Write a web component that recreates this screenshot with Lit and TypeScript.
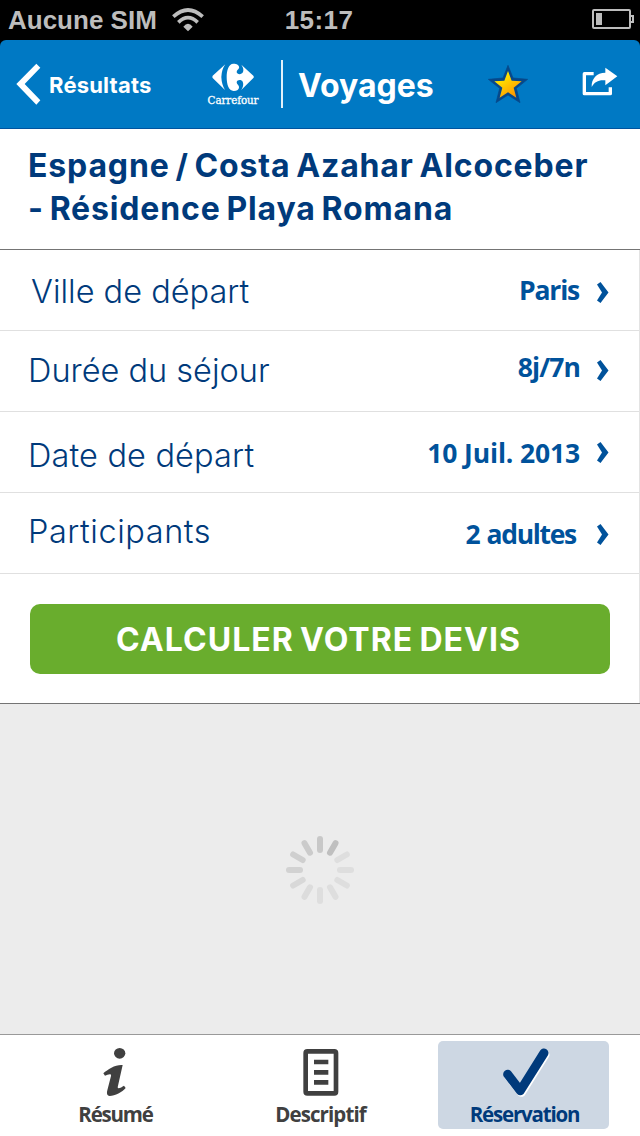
import { LitElement, html, css, svg } from "lit";
import { customElement } from "lit/decorators.js";

interface Option {
  id: string;
  label: string;
  value: string;
}

const OPTIONS: Option[] = [
  { id: "city", label: "Ville de départ", value: "Paris" },
  { id: "stay", label: "Durée du séjour", value: "8j/7n" },
  { id: "date", label: "Date de départ", value: "10 Juil. 2013" },
  { id: "people", label: "Participants", value: "2 adultes" },
];

const SPOKES = ["#c8c8c8", "#bfbfbf", "#dedede", "#dedede", "#dedede", "#dedede",
  "#dedede", "#dcdcdc", "#d8d8d8", "#d2d2d2", "#cfcfcf", "#cbcbcb"];

@customElement("status-bar")
class StatusBar extends LitElement {
  static styles = css`
    :host { display: grid; grid-template-columns: 1fr auto 1fr; height: 40px; background: #000; color: #bdbdbd;
      font: bold 26px/40px "Liberation Sans", Arial, sans-serif; }
    svg { display: block; }
    .left { display: flex; padding-left: 8px; gap: 15px; white-space: nowrap; }
    .wifi { margin-top: 8px; }
    .time { letter-spacing: 0.4px; padding-right: 2px; }
    .right { display: flex; justify-content: flex-end; padding: 9px 6px 0 0; }
  `;
  render() {
    return html`
      <div class="left">
        <span class="carrier">Aucune SIM</span>
        <svg class="wifi" width="32" height="24" viewBox="516 24 96 72" fill="none" stroke="#bdbdbd" stroke-width="11">
          <path d="M520 50Q564 10 608 50" />
          <path d="M535 67Q564 39 593 67" />
          <path d="M550 80Q564 63 578 80L564 94Z" fill="#bdbdbd" stroke="none" />
        </svg>
      </div>
      <div class="time">15:17</div>
      <div class="right">
        <svg width="42" height="20" viewBox="366 27 126 60" fill="none" stroke="#bdbdbd" stroke-width="6">
          <rect x="369" y="30" width="111" height="54" rx="3" />
          <path d="M480 48H489V66H480" />
          <rect x="378" y="39" width="18" height="36" fill="#bdbdbd" stroke="none" />
        </svg>
      </div>`;
  }
}

@customElement("nav-header")
class NavHeader extends LitElement {
  static styles = css`
    :host { display: block; background: #000; color: #fff; font-family: Inter, sans-serif; }
    svg { display: block; }
    .bar { display: flex; align-items: flex-start; height: 88px; background: #0079c4; border-bottom: 1px solid #00549f;
      border-radius: 6px 6px 0 0; }
    .back { display: flex; gap: 8px; padding: 23px 0 0 16px; width: 190px; }
    .backlabel { font: 700 22px/44px Inter, sans-serif; letter-spacing: 0.2px; }
    .logo { display: flex; flex-direction: column; align-items: center; width: 54px; padding-top: 23px; }
    .brand { font: 11.500px/14px "DejaVu Serif", serif; letter-spacing: -0.1px; font-stretch: condensed; margin-top: 2px;
      -webkit-text-stroke: 0.3px #fff; }
    .rule { width: 2px; height: 48px; margin: 20px 0 0 21px; background: #e3f1fa; }
    .title { font: 700 32px/44px Inter, sans-serif; margin: 24px 0 0 15px; width: 190px; }
    .star { margin-top: 25px; }
    .share { margin: 27px 0 0 54px; }
  `;
  render() {
    return html`<div class="bar">
      <div class="back">
        <svg width="25" height="43" viewBox="47 190 75 129"><path fill="#fff" d="M108 192L120 204 73 253 120 302 108 315 48 253Z" /></svg>
        <span class="backlabel">Résultats</span>
      </div>
      <div class="logo">
        <svg width="42" height="28" viewBox="36 69 126 84" fill="#fff">
          <path d="M76 73L38 107Q36 111 38 114L75 150Q65 134 64 111 65 88 76 73Z" />
          <path d="M100 71C112 71 119 77 117 84C116 89 110 90 110 96C111 104 125 105 129 96C132 87 128 80 124 74L160 107Q163 111 160 114L123 151C128 144 132 134 128 125C124 118 111 119 110 127C110 133 116 135 117 140C118 147 112 153 101 153C86 153 80 133 80 112C80 91 86 71 100 71Z" />
        </svg>
        <span class="brand">Carrefour</span>
      </div>
      <div class="rule"></div>
      <div class="title">Voyages</div>
      <svg class="star" width="40" height="38" viewBox="54 195 120 114">
        <defs><linearGradient id="gold" x1="0" y1="0" x2="0.7" y2="1"><stop offset="0.2" stop-color="#fff000" /><stop offset="1" stop-color="#ff9400" /></linearGradient></defs>
        <path fill="#07488a" stroke="#07488a" stroke-width="2" d="M114 196L129 234 173 238 139 265 150 308 114 285 78 308 89 265 55 238 99 234Z" />
        <path fill="url(#gold)" d="M114 213L125 242 155 244 131 263 139 293 114 277 89 293 97 263 73 244 103 242Z" />
      </svg>
      <svg class="share" width="36" height="30" viewBox="338 200 108 90" fill="none">
        <path d="M373 220H345V280H423V261" stroke="#fff" stroke-width="10" stroke-linejoin="round" />
        <path d="M408 202L444 228 408 255V240C388 238 376 244 367 260C366 235 382 217 408 217Z" fill="#fff" />
      </svg>
    </div>`;
  }
}

@customElement("booking-form")
class BookingForm extends LitElement {
  static styles = css`
    :host { display: block; background: #fff; border-bottom: 1px solid #747474; font-family: Inter, sans-serif; }
    svg { display: block; }
    h1 { margin: 0; height: 105px; padding: 15px 0 0 28px; border-bottom: 1px solid #747474; color: #003a7b;
      font: 700 32px/43px Inter, sans-serif; white-space: nowrap; letter-spacing: 0.85px; word-spacing: -2.6px; }
    .body { border-right: 1px solid #e3e3e3; height: 453px; }
    .row { display: flex; align-items: flex-start; height: 80px; padding: 0 30px 0 28px; border-bottom: 1px solid #e0e0e0; }
    .label { flex: 1; color: #003a7b; font: 300 32.500px/40px Inter, sans-serif; }
    .value { color: #00529b; font: 700 26.500px/40px "Open Sans", sans-serif; }
    .arrow { margin-left: 17px; }
    .city .label { margin: 22px 0 0 3px; } .city .value { margin: 20px 1px 0 0; letter-spacing: -1.2px; } .city .arrow { margin-top: 32px; }
    .stay .label { margin-top: 20px; } .stay .value { margin-top: 16px; letter-spacing: -0.9px; } .stay .arrow { margin-top: 29px; }
    .date .label { margin-top: 24px; letter-spacing: 0.15px; } .date .value { margin-top: 21px; letter-spacing: -0.15px; } .date .arrow { margin-top: 30px; }
    .people .label { margin-top: 19px; letter-spacing: 0.55px; } .people .value { margin: 21px 4px 0 0; letter-spacing: -1.3px; word-spacing: 1.500px; }
    .people .arrow { margin-top: 31px; }
    .submit { display: block; width: 580px; height: 70px; margin: 30px 0 0 30px; padding: 1px 0 0; border: 0; border-radius: 10px;
      background: #69ad2d; color: #fff; font: 700 32px/69px Inter, sans-serif; text-align: center; white-space: nowrap;
      letter-spacing: 1.05px; word-spacing: -2.5px; }
    .caption { margin-right: 3px; }
  `;
  render() {
    return html`
      <h1>Espagne / Costa Azahar Alcoceber<br />- Résidence Playa Romana</h1>
      <div class="body">
        ${OPTIONS.map((o) => html`<div class="row ${o.id}">
          <span class="label">${o.label}</span>
          <span class="value">${o.value}</span>
          <svg class="arrow" width="12" height="21" viewBox="0 0 12 21"><path fill="#00529b" d="M3.500 0L11.500 10.500 3.500 21 0 18.500 5 10.500 0 2.500Z" /></svg>
        </div>`)}
        <button class="submit"><span class="caption">CALCULER VOTRE DEVIS</span></button>
      </div>`;
  }
}

@customElement("tab-bar")
class TabBar extends LitElement {
  static styles = css`
    :host { display: flex; justify-content: space-between; box-sizing: border-box; height: 102px; padding: 6px 31px 0 30px;
      background: #fff; border-top: 1px solid #999; }
    svg { display: block; }
    .tab { display: flex; flex-direction: column; align-items: center; width: 171px; height: 88px; border-radius: 5px;
      color: #404040; font: 700 20.500px/28px "Open Sans", sans-serif; letter-spacing: -1.2px; }
    .icon { height: 59px; }
    .info { margin-right: 1px; }
    .middle { box-sizing: border-box; padding-left: 2px; letter-spacing: -0.9px; }
    .active { background: #cdd7e3; color: #003a7b; }
    .check { margin-left: 3px; }
    .name { white-space: nowrap; }
    .active .name { padding-left: 2px; }
  `;
  render() {
    return html`
      <div class="tab">
        <svg class="icon info" width="24" height="59" viewBox="128 48 72 177" fill="#404040">
          <ellipse cx="178" cy="85" rx="17" ry="16" />
          <path d="M129 145C143 132 166 118 187 120L172 187C173 194 184 186 191 182L196 189C186 201 164 213 148 213C139 213 139 203 141 196L152 153C154 143 142 149 134 152Z" />
        </svg>
        <span class="name">Résumé</span>
      </div>
      <div class="tab middle">
        <svg class="icon" width="36" height="59" viewBox="728 48 108 177" fill="none" stroke="#404040" stroke-width="14">
          <rect x="736" y="79" width="91" height="126" rx="5" />
          <path d="M761 111H804M761 142H804M761 172H804" />
        </svg>
        <span class="name">Descriptif</span>
      </div>
      <div class="tab active">
        <svg class="icon check" width="50" height="59" viewBox="240 48 150 177" fill="none" stroke-width="27" stroke-linecap="round" stroke-linejoin="round">
          <path stroke="#fff" d="M266 153L304 202 375 89" />
          <path stroke="#003a7b" d="M263 148L301 197 372 84" />
        </svg>
        <span class="name">Réservation</span>
      </div>`;
  }
}

@customElement("app-root")
class AppRoot extends LitElement {
  static styles = css`
    :host { display: flex; flex-direction: column; width: 640px; height: 1136px; overflow: hidden; background: #ececec; }
    .wait { flex: 1; display: flex; justify-content: center; align-items: center; }
    .spinner { display: block; margin-top: 2px; }
  `;
  render() {
    return html`
      <status-bar></status-bar>
      <nav-header></nav-header>
      <booking-form></booking-form>
      <div class="wait">
        <svg class="spinner" width="70" height="70" viewBox="-35 -35 70 70" stroke-width="6" stroke-linecap="round">
          ${SPOKES.map((c, i) => svg`<line x1="0" y1="-20" x2="0" y2="-31" stroke=${c} transform="rotate(${i * 30})" />`)}
        </svg>
      </div>
      <tab-bar></tab-bar>`;
  }
}
